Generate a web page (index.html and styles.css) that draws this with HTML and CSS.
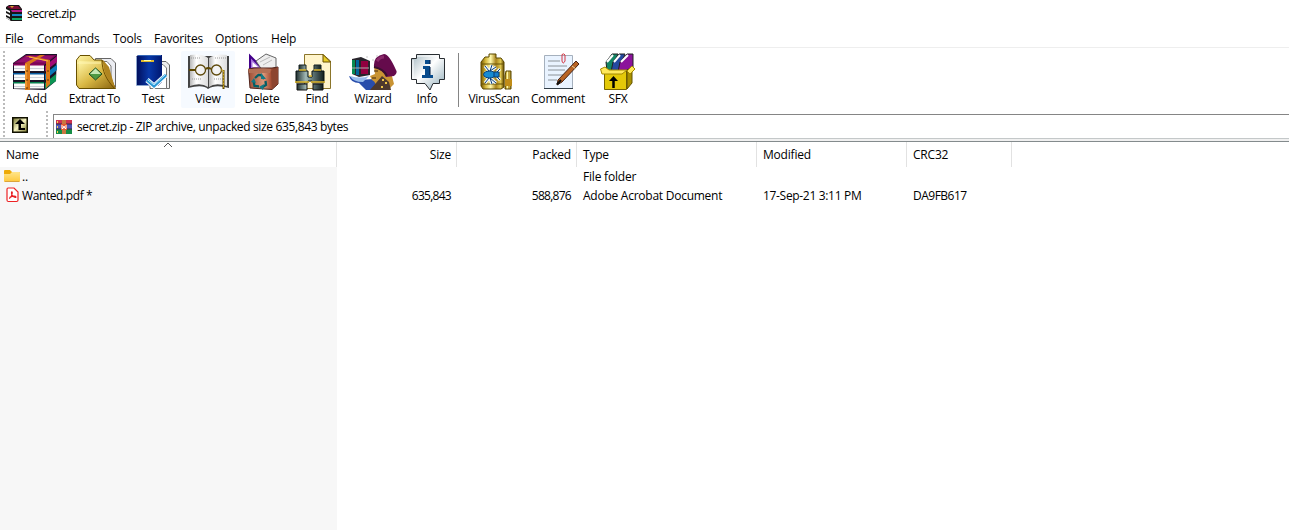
FILE: index.html
```
<!DOCTYPE html>
<html lang="en">
<head>
<meta charset="utf-8">
<title>secret.zip</title>
<link rel="stylesheet" href="styles.css">
</head>
<body>
<svg class="defs" width="0" height="0" aria-hidden="true">
  <defs>
    <linearGradient id="gold"><stop offset="0" stop-color="#765600"/><stop offset=".2" stop-color="#d5b83b"/><stop offset=".42" stop-color="#fff8aa"/><stop offset=".65" stop-color="#a8821c"/><stop offset=".85" stop-color="#e0c850"/><stop offset="1" stop-color="#604600"/></linearGradient>
    <linearGradient id="folder" x1="0" y1="0" x2="1" y2="1"><stop offset="0" stop-color="#fff6a8"/><stop offset=".5" stop-color="#d9b844"/><stop offset="1" stop-color="#8a6510"/></linearGradient>
    <linearGradient id="olive" x1="0" y1="0" x2="1" y2="1"><stop offset="0" stop-color="#6d6c28"/><stop offset=".5" stop-color="#f5f3c0"/><stop offset="1" stop-color="#77752c"/></linearGradient>
    <linearGradient id="navy"><stop offset="0" stop-color="#000c58"/><stop offset=".5" stop-color="#0838a8"/><stop offset="1" stop-color="#001770"/></linearGradient>
    <linearGradient id="page"><stop offset="0" stop-color="#b8b8b8"/><stop offset=".35" stop-color="#fff"/><stop offset="1" stop-color="#ddd"/></linearGradient>
    <linearGradient id="copper"><stop offset="0" stop-color="#9c4d34"/><stop offset=".5" stop-color="#dc9a7c"/><stop offset=".75" stop-color="#a85238"/><stop offset="1" stop-color="#622717"/></linearGradient>
    <linearGradient id="steel"><stop offset="0" stop-color="#1e2d2d"/><stop offset=".35" stop-color="#a1b8b5"/><stop offset=".65" stop-color="#566c6c"/><stop offset="1" stop-color="#111d1d"/></linearGradient>
    <linearGradient id="bubble" x1="0" y1="0" x2="1" y2="1"><stop offset="0" stop-color="#a4b8c0"/><stop offset=".45" stop-color="#fff"/><stop offset="1" stop-color="#8eabb8"/></linearGradient>
    <linearGradient id="yellow-folder" x1="0" y1="0" x2="0" y2="1"><stop offset="0" stop-color="#ffe58c"/><stop offset="1" stop-color="#ffc83a"/></linearGradient>
  </defs>
</svg>

<header class="titlebar">
  <svg class="app-icon" width="17" height="17" viewBox="0 0 17 17">
    <path d="M0 2L3 0H13L16 4V16H5L0 13Z" fill="#161616"/>
    <path d="M1 2L3 1H12L15 4H5Z" fill="#7b0c35"/><path d="M4 1H8L6 3Z" fill="#d2a32d"/>
    <path d="M5 5H16V7H6Z" fill="#b4198b"/><path d="M6 9H16V11H6Z" fill="#1684c5"/><path d="M6 13H16V15H6Z" fill="#12a765"/>
    <path d="M0 4L4 6V8L0 6ZM0 8L4 10V12L0 10ZM0 12L4 14V15L0 13Z" fill="#fff"/>
  </svg>
  <span class="title">secret.zip</span>
</header>
<nav class="menu">
  <span class="m-file">File</span><span class="m-commands">Commands</span><span class="m-tools">Tools</span><span class="m-favorites">Favorites</span><span class="m-options">Options</span><span>Help</span>
</nav>

<section class="toolbar">
  <i class="grip"></i>
  <div class="tool w54">
    <svg viewBox="12 52 48 40">
      <path d="M13 63L26 54L57 54L56 81L45 90L13 89Z" fill="#171326"/>
      <path d="M13 63.500L26 55H57L44 65Z" fill="#7b0758"/><path d="M17 62L27 56H54L45 62.500Z" fill="#94106d"/>
      <path d="M45 66L57 56V62L45 71.500Z" fill="#a00a74"/><path d="M45 74L57 64.500V70L45 80Z" fill="#0879b8"/><path d="M45 83L56 74V81L45 89Z" fill="#0b9454"/>
      <path d="M14 65H44V71H14ZM14 74H44V80H14ZM14 83H44V88.500H14Z" fill="#fafafa"/>
      <path d="M14 68.500H44M14 77.500H44M14 86.500H44" stroke="#cbd0d8"/>
      <path d="M13 64H44V65.500H13Z" fill="#88065e"/><path d="M13 73H44V74.500H13Z" fill="#075da1"/><path d="M13 82H44V83.500H13Z" fill="#078050"/>
      <path d="M25 56H30L50 60V65L46 64V61Z" fill="#d97718"/><path d="M40 55H45L30 64V90H25V63Z" fill="#d97718"/>
      <path d="M46 62L50 60V84L46 88Z" fill="#d97718"/><path d="M26 64V88M29 57L48 61" stroke="#ffb64d"/><path d="M26 71h2M26 80h2M26 88h2M47 71h2M47 80h2" stroke="#603400"/>
    </svg><span>Add</span>
  </div>
  <div class="tool w62">
    <svg viewBox="70 52 48 40">
      <path d="M95.500 58.500H111L115.500 63V87H95Z" fill="#ecedf2" stroke="#666"/><path d="M100 61.500H107L111 66V80" fill="#fff" stroke="#777"/>
      <path d="M76.500 60L80 55.500H90L94 60H102L115.500 88.500H79L76.500 85Z" fill="url(#folder)" stroke="#685000"/>
      <path d="M79 61H101L109 70L115 88H79Z" fill="url(#folder)"/><path d="M77 63H101" stroke="#fff5b2"/><path d="M103 60C103 69 105 77 115 88L109 67Z" fill="#b08520"/><path d="M102 60C102 71 106 79 114 88" fill="none" stroke="#735000"/>
      <path d="M95.500 68L102 74L95.500 80L89 74Z" fill="#4e9a43" stroke="#234d20"/><path d="M95.500 68.500L90 74H101Z" fill="#c6e8b4"/>
    </svg><span class="t-extract">Extract To</span>
  </div>
  <div class="tool w56">
    <svg viewBox="129 52 48 40">
      <path d="M158 61.500H166L169.500 65V88.500H150V61Z" fill="#eee" stroke="#666"/><path d="M160 64.500H163L166.500 68V88.500H151" fill="#fff" stroke="#777"/>
      <path d="M138 55H162V82L158 86H138L136 84V57Z" fill="url(#navy)"/><path d="M136.500 57V85.500H157" fill="none" stroke="#8ca6cd"/><path d="M138 55.500H161" stroke="#3567b6"/>
      <path d="M141 61H154" stroke="#dfb82c" stroke-width="2"/><path d="M144 60.500H151" stroke="#ffffa3"/>
      <path d="M147 80L154 86L166 75" fill="none" stroke="#fff" stroke-width="5"/><path d="M147 80L154 86L166 75" fill="none" stroke="#2695d4" stroke-width="3"/><path d="M148 80L154 85L165 75" fill="none" stroke="#b4e4ff"/>
    </svg><span>Test</span>
  </div>
  <div class="tool w54 active">
    <svg viewBox="184 52 48 40">
      <path d="M188 56V88Q203 84 208 89Q215 84 229 88V56" fill="#444"/><path d="M190 55Q202 53 208 58V87Q201 82 190 86Z" fill="url(#page)"/><path d="M209 58Q216 53 227 55V86Q215 82 209 87Z" fill="url(#page)"/>
      <path d="M208.500 57V88" stroke="#444" stroke-dasharray="2 1"/><path d="M191 58H201M215 58H226M192 79H202M214 79H224" stroke="#999" stroke-dasharray="1 1"/>
      <path d="M189 70H195M206 69Q208 67 211 69M223.500 70V89" fill="none" stroke="#5c4700" stroke-width="2"/><circle cx="200.500" cy="70" r="5" fill="#f2f2f2" fill-opacity=".75" stroke="#5d4809" stroke-width="1.300"/><circle cx="216.500" cy="70" r="5" fill="#f2f2f2" fill-opacity=".75" stroke="#5d4809" stroke-width="1.300"/>
      <path d="M221 70H223.500V88" fill="none" stroke="#d6ae20" stroke-dasharray="2 1"/>
    </svg><span>View</span>
  </div>
  <div class="tool w54">
    <svg viewBox="238 52 48 40">
      <path d="M250 69V56L263 69Z" fill="#a875dd" stroke="#43008a" stroke-width="2"/><path d="M252.500 62V67H258Z" fill="#fff"/>
      <path d="M256 61L266 54L276 58V70H262Z" fill="#eee" stroke="#666"/><path d="M260 62L270 57M263 65L272 60" stroke="#bbb"/>
      <path d="M248.500 69L254 68H272L278 67V84L272 89.500L250 88Z" fill="url(#copper)" stroke="#51231b"/><path d="M248 69H271L270 73H249Z" fill="#b47055"/><path d="M271 71L278 67V84L272 89Z" fill="#8c4530"/>
      <path d="M255 78L258.500 75H261L264 79M265.500 81L266 85L262 87.500M259 86.500L254.500 86L253.500 81" fill="none" stroke="#055e65" stroke-width="2.300"/><path d="M261 73L266 79H261ZM264 84L259 87L263 90ZM251 82L256 83L254 78Z" fill="#127a86"/>
    </svg><span>Delete</span>
  </div>
  <div class="tool w56">
    <svg viewBox="293 52 48 40">
      <path d="M304.500 54.500H323L330.500 61V88.500H304.500Z" fill="#fff4cb" stroke="#8b752a"/><path d="M323 54.500V62H330.500Z" fill="#e8cc26" stroke="#695000"/>
      <path d="M299 65H306V71H299ZM314 65H321V71H314Z" fill="url(#steel)" stroke="#172020"/><path d="M296 71H308V77H312V71H324V83H312V81H308V83H296Z" fill="url(#steel)" stroke="#071010"/>
      <path d="M299 70H306M314 70H321M309 76H312" stroke="#ddb82d" stroke-width="1.500"/><path d="M295 82H309M311 82H325" stroke="#e2bb2c" stroke-width="1.500"/><path d="M297 84H307V90H297ZM313 84H323V90H313Z" fill="url(#steel)" stroke="#111"/>
    </svg><span>Find</span>
  </div>
  <div class="tool w56">
    <svg viewBox="349 52 48 40">
      <path d="M352 59L361 57L370 61V75L359 77L352 74Z" fill="#28252c"/><path d="M352 60H355V74H352Z" fill="#098a50"/><path d="M356 60H359V75H356Z" fill="#00659b"/><path d="M361 61H368V74H361Z" fill="#92003f"/><path d="M352 68H369" stroke="#aaa"/>
      <path d="M367 56V58M373 59V61M377 55V57" stroke="#ccc"/>
      <path d="M349 76L358 80L374 79L382 90H366L359 83Q351 83 349 76Z" fill="#284dab"/><path d="M350 76Q361 79 369 76L363 82Q353 82 350 76Z" fill="#98bceb"/>
      <path d="M374 67L382 67L391 72L394 84L388 90H374Q378 83 372 80L370 76L375 74Z" fill="#c99333"/><path d="M376 83L382 76L389 82L391 90H370Z" fill="#4d392e"/><path d="M374 71H378M372 78H376" stroke="#43270c"/>
      <path d="M374 67Q373 56 384 54Q389 54 396 70Q398 73 394 76L386 77Q383 70 374 67Z" fill="#650b4c"/><path d="M374 67Q384 69 387 76" fill="none" stroke="#38102f" stroke-width="2"/><path d="M377 61Q380 57 384 57" fill="none" stroke="#8a296a" stroke-width="3"/><path d="M382 80h2M385 83h2M381 87h2" stroke="#efc748" stroke-width="2"/>
    </svg><span>Wizard</span>
  </div>
  <div class="tool w52">
    <svg viewBox="403 52 48 40">
      <path d="M416.500 54.500H439.500V58.500H444.500V79.500H439.500V83.500H433L430 90L425 83.500H416.500V79.500H411.500V58.500H416.500Z" fill="url(#bubble)" stroke="#282d31"/><path d="M417 56H438M413 60V79" stroke="#fff"/>
      <path d="M425 60H430V64H425ZM423 66H430V75H433V78H422V75H425V69H423Z" fill="#084c8d"/><path d="M430 60V64M430 67V75" stroke="#001b40"/>
    </svg><span>Info</span>
  </div>
  <i class="separator"></i>
  <div class="tool w62">
    <svg viewBox="469 52 48 40">
      <path d="M488 54H495V58H500L503 62V87L500 89H482L480 86V62L484 57H488Z" fill="url(#gold)" stroke="#5b4800"/><path d="M481 64H502M481 84H502" stroke="#675309"/>
      <path d="M505 71H510V89H504V76Z" fill="url(#gold)" stroke="#5b4800"/><path d="M504 79H511V86H504Z" fill="#c08c18"/>
      <path d="M484 66L488 71L484 73M484 83L488 78L484 76M491 65L489 71L495 67M491 84L489 78L495 83M499 69L496 72M499 80L496 77" fill="none" stroke="#eff7ff" stroke-width="3"/><path d="M484 66L488 71L484 73M484 83L488 78L484 76M491 65L489 71L495 67M491 84L489 78L495 83M499 69L496 72M499 80L496 77" fill="none" stroke="#0b3d75"/>
      <ellipse cx="488.500" cy="74.500" rx="6" ry="3.500" fill="#168bd2" stroke="#073e74"/><path d="M493 72H498V77H493Z" fill="#187fcb" stroke="#073e74"/>
    </svg><span class="t-virus">VirusScan</span>
  </div>
  <div class="tool w66">
    <svg viewBox="534 52 48 40">
      <path d="M544.500 55.500H572.500V88.500H544.500Z" fill="#e9f3ff" stroke="#a5b0bd"/><path d="M544 88.500H573" stroke="#34404a"/>
      <path d="M548 61H560M548 66H567M548 70H565M548 75H563M548 80H557" stroke="#8b9298"/><path d="M562 58V54.500Q564 53 565 55V61Q563 65 562 61V58" fill="none" stroke="#d53745"/>
      <path d="M576 61L579 64L562 82L557 85L558 80Z" fill="#b96424" stroke="#472213"/><path d="M572 66L576 69" stroke="#ead39d"/><path d="M557 84.500L561 80" stroke="#101010" stroke-width="2"/>
    </svg><span class="t-comment">Comment</span>
  </div>
  <div class="tool w54">
    <svg viewBox="594 52 48 40">
      <path d="M606 62L612 54H618L611 71H607Z" fill="#118563" stroke="#222"/><path d="M613 62L619 54H625L618 72H611Z" fill="#2449a0" stroke="#222"/><path d="M620 62L627 54H633V67L623 72H618Z" fill="#8b139b" stroke="#222"/><path d="M607 62L613 55M614 62L620 55M621 62L628 55" stroke="#fff" stroke-width="2"/>
      <path d="M604.500 70L626.500 71V89.500H604.500Z" fill="#e4c908" stroke="#796600"/><path d="M627 71L632 67V83L627 89Z" fill="#a99100" stroke="#655500"/><path d="M600.500 69L605 67L609 70H627L622 74H602ZM627 71L632 66L635 69L630 74Z" fill="#ffe85a" stroke="#a48a00"/><path d="M613.500 88V79" stroke="#000" stroke-width="2.500"/><path d="M609 81H618L613.500 76Z"/>
    </svg><span>SFX</span>
  </div>
</section>

<section class="address">
  <i class="grip"></i>
  <svg class="up" width="17" height="17" viewBox="0 0 17 17"><path d="M.75.75H15.250V15.250H.75Z" fill="url(#olive)" stroke="#101000" stroke-width="1.500"/><path d="M8 2L3 7H6.500V13H13V11H9V7H13Z"/></svg>
  <i class="grip second"></i>
  <div class="path">
    <svg width="16" height="16" viewBox="0 0 16 16"><path d="M0 1H16V5H0Z" fill="#ce3150"/><path d="M0 5H16V10H0Z" fill="#5255b5"/><path d="M0 10H16V15H0Z" fill="#168d46"/><path d="M0 5H16M0 10H16" stroke="#382b45"/><path d="M1.500 2V4M1.500 7V9M1.500 12V14" stroke="#f7d34d"/><path d="M6 1H10V15H6Z" fill="#c97740"/><path d="M5 5H11V11H5Z" fill="#e45731"/><path d="M6 6V9.500H7L8 7L9 9.500H10V6" fill="none" stroke="#fff"/></svg>
    <span>secret.zip - ZIP archive, unpacked size 635,843 bytes</span>
  </div>
</section>
<i class="divider"></i>

<main class="files">
  <div class="line head">
    <span class="name">Name<svg class="sort" width="10" height="6" viewBox="0 0 10 6"><path d="M1 5L5 1L9 5" fill="none" stroke="#555"/></svg></span><span class="num size">Size</span><span class="num">Packed</span><span class="type">Type</span><span class="modified">Modified</span><span class="crc">CRC32</span>
  </div>
  <div class="line parent">
    <span class="name"><svg width="17" height="14" viewBox="0 0 17 14"><path d="M0 2Q0 1 1 1H6L8 3H15L16 4V12L15 13H1L0 12Z" fill="#edaa08"/><path d="M0 5H6L8 3H15L16 4V12L15 13H1L0 12Z" fill="url(#yellow-folder)"/><path d="M1 12.500H15" stroke="#dba43c"/></svg><b>..</b></span><span></span><span></span><span class="type">File folder</span><span></span><span></span>
  </div>
  <div class="line entry">
    <span class="name pdf"><svg width="13" height="16" viewBox="0 0 13 16"><path d="M2 1H8L12 5V13Q12 14.500 10.500 14.500H2.500Q1 14.500 1 13V2.500Q1 1 2 1Z" fill="#fff" stroke="#ed2224" stroke-width="1.200"/><path d="M3 11.500C5 11 6.500 7 6.300 5C5.500 4 5 6 6 8C7 9.500 9 11 10 10C9.500 8.500 6 9 3.500 10.500" fill="none" stroke="#e91c20" stroke-width="1.100"/></svg>Wanted.pdf *</span><span class="num size">635,843</span><span class="num">588,876</span><span class="type long">Adobe Acrobat Document</span><span class="modified">17-Sep-21 3:11 PM</span><span class="crc">DA9FB617</span>
  </div>
  <div class="blank"></div>
</main>
</body>
</html>
```
FILE: styles.css
```
* { box-sizing: border-box; }
body {
  margin: 0;
  width: 1289px;
  height: 530px;
  overflow: hidden;
  display: flex;
  flex-direction: column;
  background: #fff;
  color: #000;
  font: 12px/18px "Open Sans", "Noto Sans", sans-serif;
  letter-spacing: -0.2px;
  white-space: nowrap;
}
svg { display: block; flex: none; }
.defs { position: absolute; }
.titlebar { height: 29px; display: flex; align-items: flex-start; padding: 5px 0 0 6px; gap: 4px; }
.title { letter-spacing: -0.45px; }
.menu { height: 19px; display: flex; padding-left: 5px; border-bottom: 1px solid #eee; line-height: 20px; }
.m-file { width: 32px; }
.m-commands { width: 76px; }
.m-tools { width: 41px; }
.m-favorites { width: 61px; }
.m-options { width: 56px; }
.toolbar { height: 63px; display: flex; padding: 3px 0 0 3px; }
.grip { width: 2px; margin-right: 4px; background: repeating-linear-gradient(#bbb 0 2px, #fff 2px 4px); }
.tool { height: 57px; display: flex; flex-direction: column; align-items: center; padding-top: 1px; }
.tool svg { width: 48px; height: 40px; margin-bottom: -2px; }
.t-extract { letter-spacing: -0.45px; padding-left: 1px; }
.t-virus { letter-spacing: -0.4px; }
.active { background: #f6faff; border-radius: 2px; }
.w52 { width: 52px; }
.w54 { width: 54px; }
.w56 { width: 56px; }
.w62 { width: 62px; }
.w66 { width: 66px; }
.separator { width: 1px; height: 54px; margin: 2px 4px 0 5px; background: #858585; }
.address { height: 27px; display: flex; padding-left: 3px; align-items: flex-start; }
.address .grip { height: 26px; }
.up { margin: 6px 17px 0 3px; }
.path { flex: 1; height: 25px; margin: 3px 0 0 1px; border: 1px solid #858585; border-right: 0; display: flex; align-items: center; padding-left: 2px; gap: 5px; letter-spacing: -0.36px; }
.divider { height: 4px; border-top: 1px solid #c4c8c9; border-bottom: 1px solid #848b8d; background: #f0f0f0; }
.files { flex: 1; display: flex; flex-direction: column; }
.line { display: grid; grid-template-columns: 337px 120px 120px 180px 150px 105px; height: 19px; line-height: 19px; }
.head { height: 25px; line-height: 25px; }
.head > span { border-right: 1px solid #e2e2e2; }
.line .name { background: #f7f7f7; display: flex; }
.head .name { background: #fff; padding-left: 6px; position: relative; }
.sort { position: absolute; left: 163px; top: 0; }
.num { text-align: right; padding-right: 6px; }
.head .num { padding-right: 5px; }
.type, .modified, .crc { padding-left: 6px; }
.parent { height: 20px; }
.parent .name { padding: 2px 0 0 4px; }
.parent b { font-weight: 400; line-height: 16px; margin-left: 1px; }
.entry { line-height: 18px; }
.entry .num { letter-spacing: -0.72px; }
.entry .long { letter-spacing: -0.25px; }
.entry .modified { letter-spacing: -0.32px; }
.entry .crc { letter-spacing: -0.5px; }
.name.pdf { padding-left: 6px; gap: 3px; letter-spacing: -0.4px; }
.blank { flex: 1; width: 337px; background: #f7f7f7; }
```
